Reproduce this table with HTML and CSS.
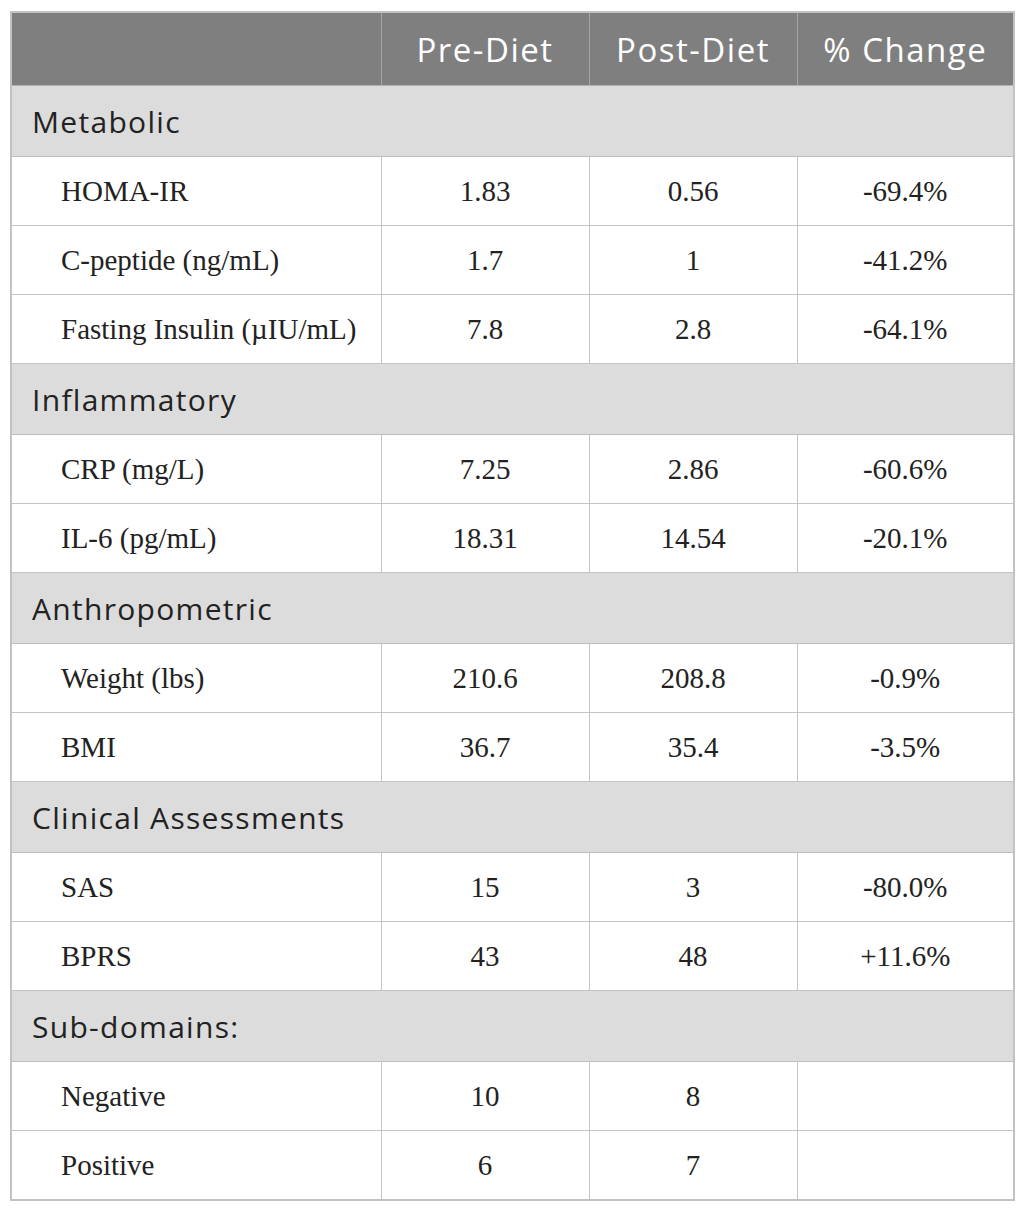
FILE: index.html
```html
<!DOCTYPE html>
<html>
<head>
<meta charset="utf-8">
<link rel="stylesheet" href="styles.css">
</head>
<body>
<table class="data">
  <colgroup>
    <col class="c-label">
    <col class="c-num">
    <col class="c-num">
    <col class="c-chg">
  </colgroup>
  <thead>
    <tr class="head">
      <th></th>
      <th>Pre-Diet</th>
      <th>Post-Diet</th>
      <th>% Change</th>
    </tr>
  </thead>
  <tbody>
    <tr class="section"><td colspan="4">Metabolic</td></tr>
    <tr class="row"><td class="label">HOMA-IR</td><td>1.83</td><td>0.56</td><td>-69.4%</td></tr>
    <tr class="row"><td class="label">C-peptide (ng/mL)</td><td>1.7</td><td>1</td><td>-41.2%</td></tr>
    <tr class="row"><td class="label">Fasting Insulin (µIU/mL)</td><td>7.8</td><td>2.8</td><td>-64.1%</td></tr>
    <tr class="section"><td colspan="4">Inflammatory</td></tr>
    <tr class="row"><td class="label">CRP (mg/L)</td><td>7.25</td><td>2.86</td><td>-60.6%</td></tr>
    <tr class="row"><td class="label">IL-6 (pg/mL)</td><td>18.31</td><td>14.54</td><td>-20.1%</td></tr>
    <tr class="section"><td colspan="4">Anthropometric</td></tr>
    <tr class="row"><td class="label">Weight (lbs)</td><td>210.6</td><td>208.8</td><td>-0.9%</td></tr>
    <tr class="row"><td class="label">BMI</td><td>36.7</td><td>35.4</td><td>-3.5%</td></tr>
    <tr class="section"><td colspan="4">Clinical Assessments</td></tr>
    <tr class="row"><td class="label">SAS</td><td>15</td><td>3</td><td>-80.0%</td></tr>
    <tr class="row"><td class="label">BPRS</td><td>43</td><td>48</td><td>+11.6%</td></tr>
    <tr class="section"><td colspan="4">Sub-domains:</td></tr>
    <tr class="row"><td class="label">Negative</td><td>10</td><td>8</td><td></td></tr>
    <tr class="row"><td class="label">Positive</td><td>6</td><td>7</td><td></td></tr>
  </tbody>
</table>
</body>
</html>
```
FILE: styles.css
```css
html, body {
  margin: 0;
  padding: 0;
  background: #ffffff;
}
body {
  padding: 11px 0 0 10px;
}
.data {
  border-collapse: collapse;
  width: 1003px;
  table-layout: fixed;
  border: 2px solid #c2c2c2;
}
.c-label { width: 370px; }
.c-num { width: 208px; }
.c-chg { width: 217px; }

.head th {
  background: #7f7f7f;
  color: #ffffff;
  font-family: "Open Sans", "Noto Sans", sans-serif;
  font-weight: 400;
  font-size: 33px;
  letter-spacing: 1.5px;
  height: 72px;
  padding: 0;
  text-align: center;
  vertical-align: middle;
  border-left: 1px solid #a6a6a6;
  border-bottom: 1px solid #b0b0b0;
}
.head th:first-child { border-left: none; }

.section td {
  background: #dcdcdc;
  color: #222222;
  font-family: "Open Sans", "Noto Sans", sans-serif;
  font-size: 30px;
  letter-spacing: 1.3px;
  height: 70px;
  padding: 0 0 0 20px;
  vertical-align: middle;
  border-bottom: 1px solid #bdbdbd;
  border-top: 1px solid #bdbdbd;
}

.row td {
  font-family: "Liberation Serif", "Times New Roman", serif;
  font-size: 29px;
  color: #222222;
  height: 68px;
  padding: 0;
  text-align: center;
  vertical-align: middle;
  border: 1px solid #c4c4c4;
}
.row td.label {
  text-align: left;
  padding-left: 49px;
}
```
